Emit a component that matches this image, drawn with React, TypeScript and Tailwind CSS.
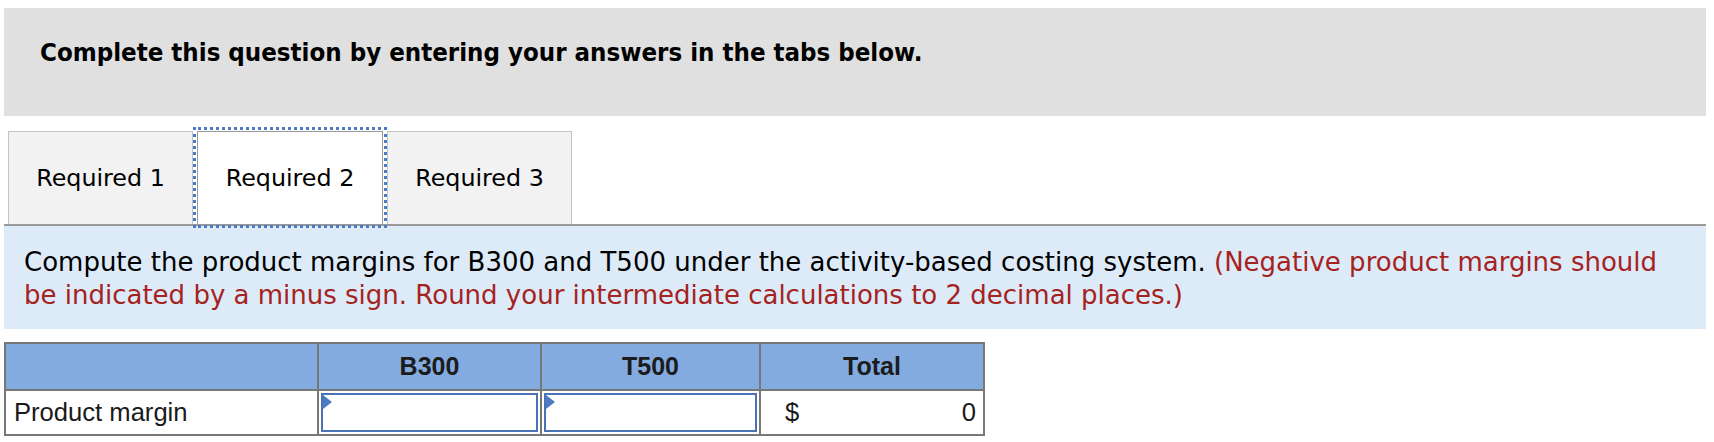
import React from "react";

const tabs = ["Required 1", "Required 2", "Required 3"];

const App = () => {
  return (
    <div className="w-[1714px] h-[442px] bg-white overflow-hidden">
      {/* Header */}
      <div className="mt-[8px] ml-[4px] w-[1702px] h-[108px] bg-[#e0e0e0] pl-[36px] pt-[28px]">
        <h1 className="text-[25.6px] leading-[32px] font-bold text-black font-['DejaVu_Sans_Condensed','DejaVu_Sans',sans-serif] [font-stretch:condensed]">
          Complete this question by entering your answers in the tabs below.
        </h1>
      </div>

      {/* Tabs */}
      <div className="flex mt-[15px] pl-[8px] font-['DejaVu_Sans',sans-serif] text-[23.8px] text-black">
        {tabs.map((tab, i) =>
          i === 1 ? (
            <div
              key={tab}
              className="relative z-10 mx-[4px] w-[186px] h-[93px] bg-white border border-b-0 border-[#999999] flex items-center justify-center pt-[2px] outline-[3px] outline-dotted outline-[#4a7bc4] outline-offset-[1px]"
            >
              {tab}
            </div>
          ) : (
            <div
              key={tab}
              className="w-[185px] h-[93px] bg-[#f2f2f2] border border-b-0 border-[#c4c4c4] flex items-center justify-center pt-[2px]"
            >
              {tab}
            </div>
          )
        )}
      </div>

      {/* Instructions */}
      <div className="ml-[4px] w-[1702px] border-t-2 border-[#999999] bg-[#ddeaf7] pl-[20px] pr-[30px] pt-[20px] pb-[17px] font-['DejaVu_Sans',sans-serif] text-[26px] leading-[33px] text-black">
        Compute the product margins for B300 and T500 under the activity-based costing system.{" "}
        <span className="text-[#a5231f]">
          (Negative product margins should be indicated by a minus sign. Round your intermediate
          calculations to 2 decimal places.)
        </span>
      </div>

      {/* Table */}
      <table className="mt-[13px] ml-[4px] border-collapse font-['Liberation_Sans',Arial,sans-serif] text-[25.6px] text-[#1a1a1a]">
        <thead>
          <tr className="h-[47px] bg-[#83abdf]">
            <th className="w-[313px] border-2 border-[#777777]"></th>
            <th className="w-[223px] border-2 border-[#777777] font-bold text-[25px] text-[#1c1c1c]">B300</th>
            <th className="w-[219px] border-2 border-[#777777] font-bold text-[25px] text-[#1c1c1c]">T500</th>
            <th className="w-[224px] border-2 border-[#777777] font-bold text-[25px] text-[#1c1c1c]">Total</th>
          </tr>
        </thead>
        <tbody>
          <tr className="h-[45px] bg-white">
            <td className="border-2 border-[#777777] pl-[8px] font-normal">Product margin</td>
            <td className="border-2 border-[#777777] p-[2px]">
              <div className="relative h-[39px] border-2 border-[#4a72b4] bg-white">
                <span className="absolute top-0 left-0 w-0 h-0 border-y-[7px] border-y-transparent border-l-[9px] border-l-[#4a7bc4]" />
              </div>
            </td>
            <td className="border-2 border-[#777777] p-[2px]">
              <div className="relative h-[39px] border-2 border-[#4a72b4] bg-white">
                <span className="absolute top-0 left-0 w-0 h-0 border-y-[7px] border-y-transparent border-l-[9px] border-l-[#4a7bc4]" />
              </div>
            </td>
            <td className="border-2 border-[#777777] pl-[24px] pr-[7px]">
              <div className="flex justify-between">
                <span>$</span>
                <span>0</span>
              </div>
            </td>
          </tr>
        </tbody>
      </table>
    </div>
  );
};

export default App;
